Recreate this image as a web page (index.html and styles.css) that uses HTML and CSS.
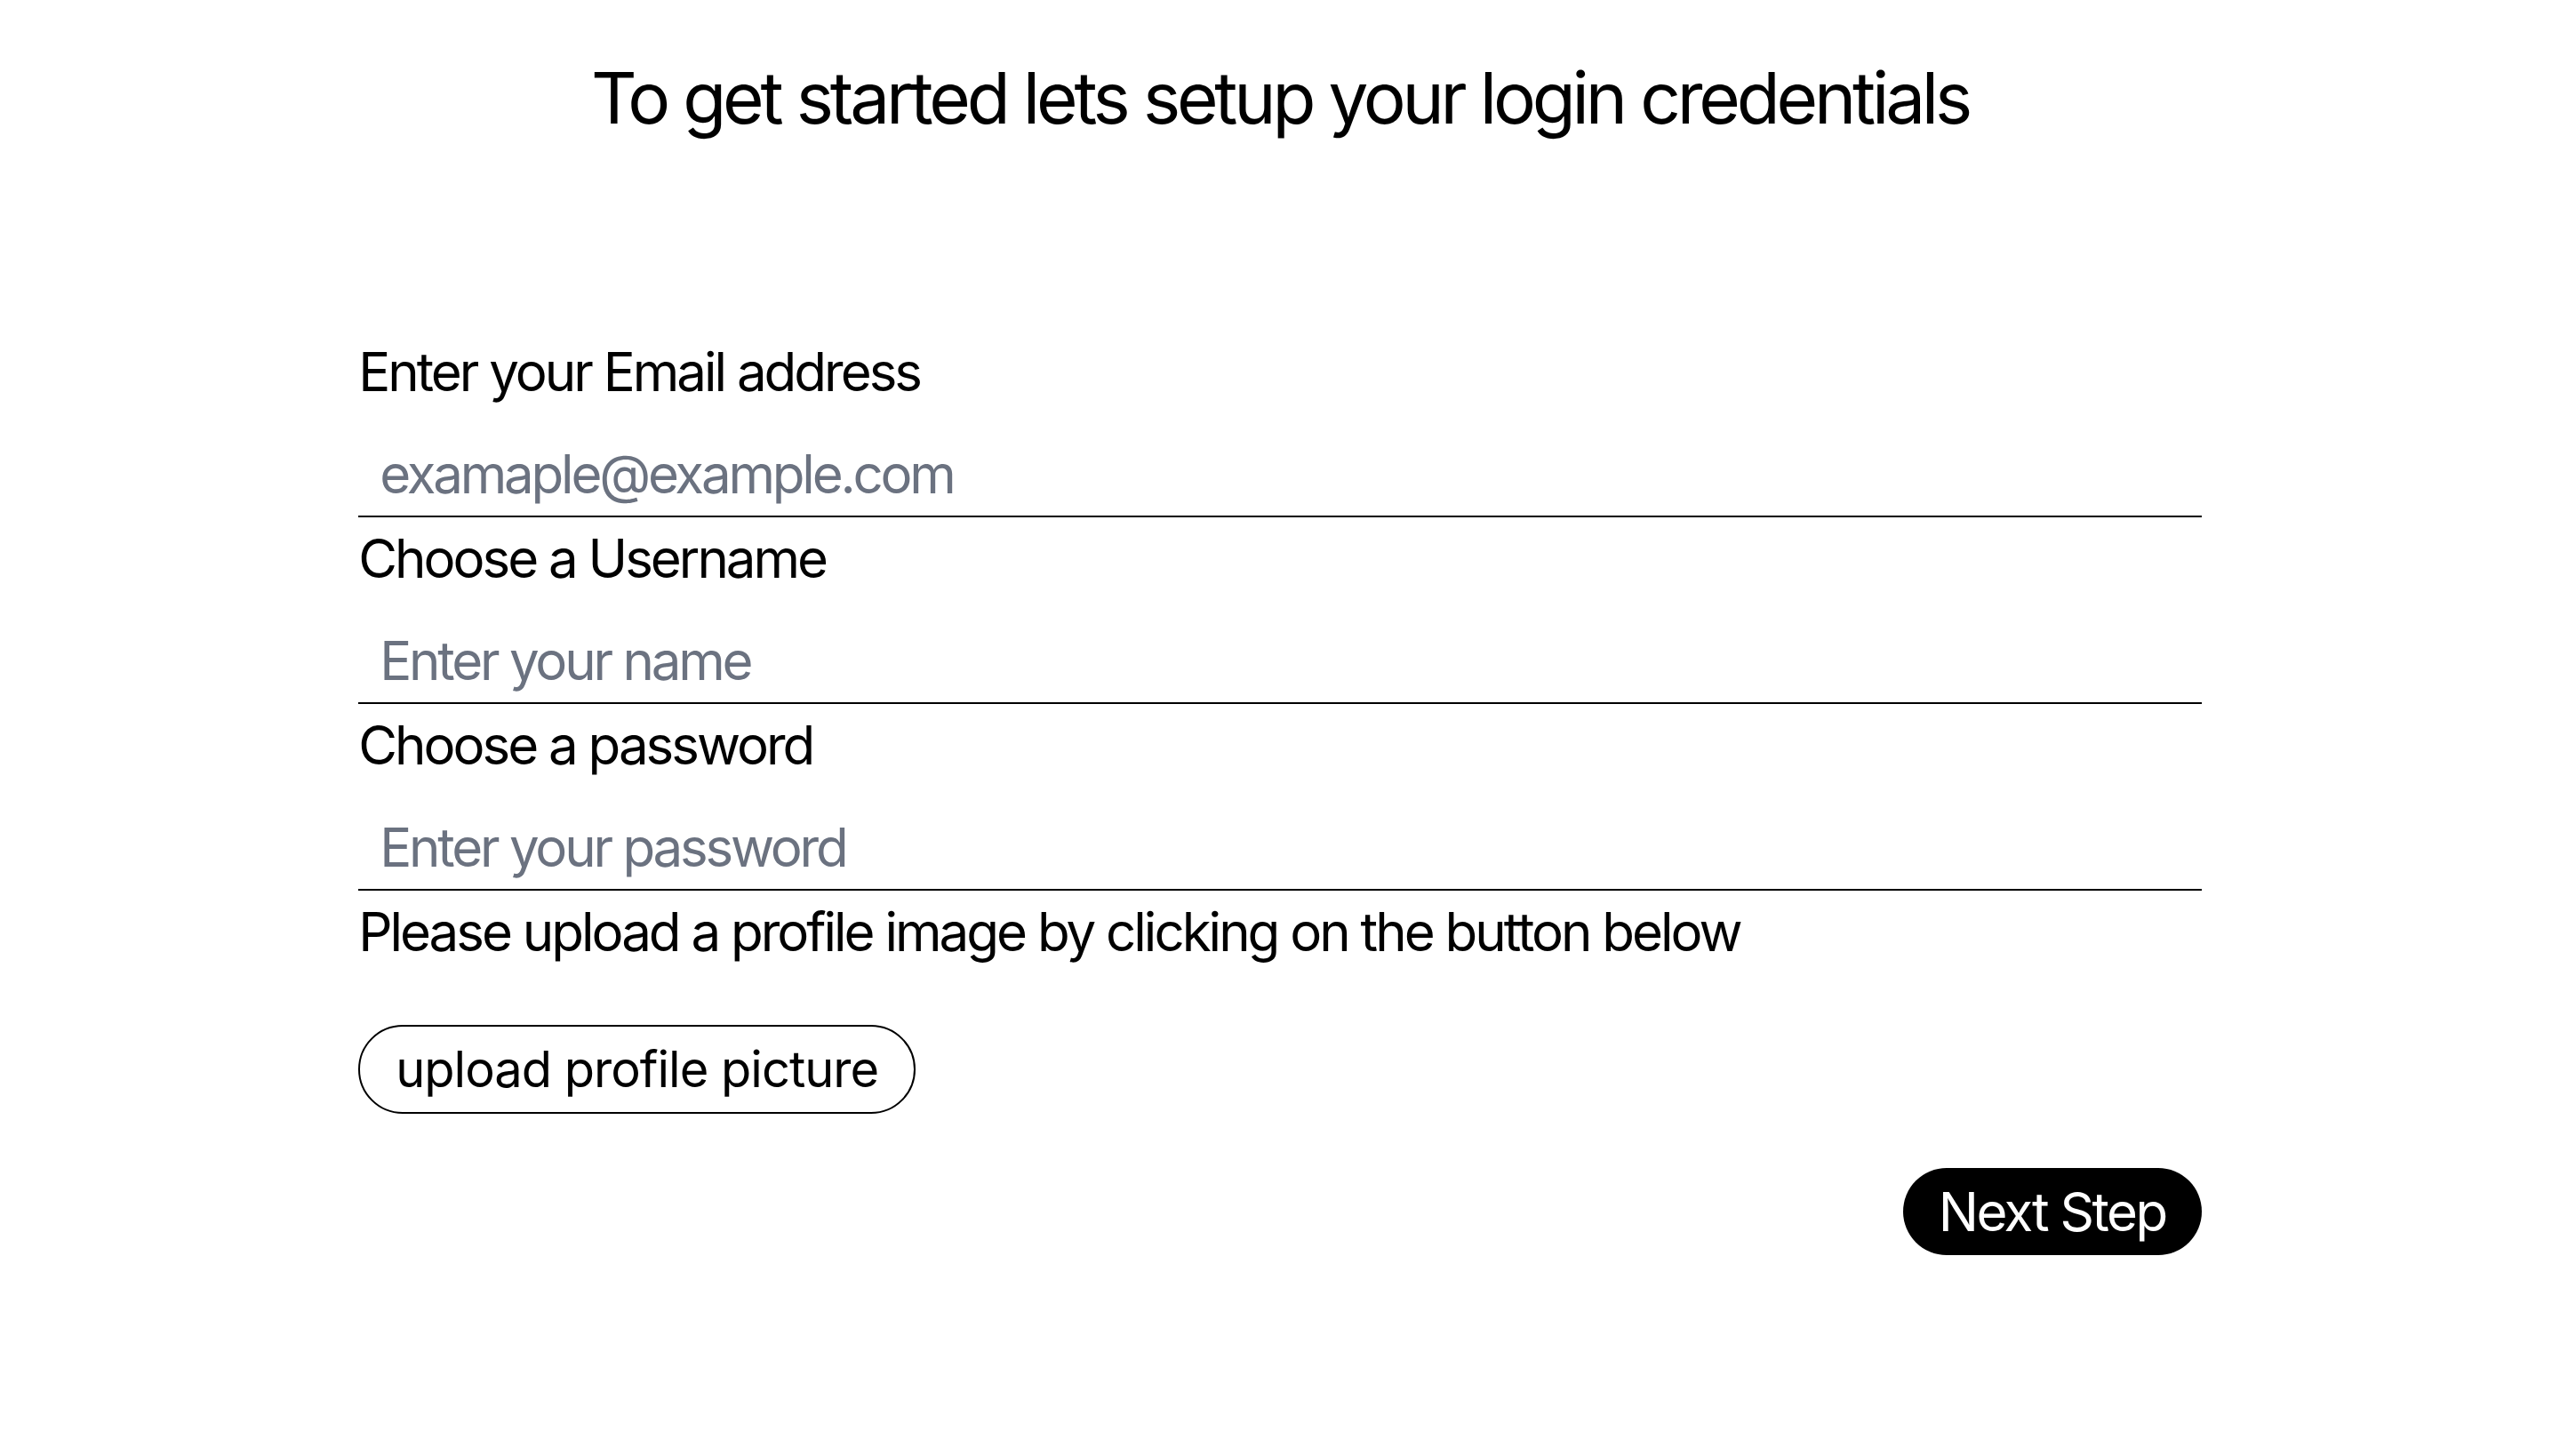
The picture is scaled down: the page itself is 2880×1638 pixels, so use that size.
FILE: index.html
```html
<!DOCTYPE html>
<html lang="en">
<head>
<meta charset="utf-8">
<title>Setup login credentials</title>
<link rel="stylesheet" href="styles.css">
</head>
<body>
<main class="page">
  <h1 class="title">To get started lets setup your login credentials</h1>
  <form class="form">
    <label class="label" for="email">Enter your Email address</label>
    <input class="field" id="email" type="email" placeholder="examaple@example.com">
    <label class="label" for="username">Choose a Username</label>
    <input class="field" id="username" type="text" placeholder="Enter your name">
    <label class="label" for="password">Choose a password</label>
    <input class="field" id="password" type="password" placeholder="Enter your password">
    <p class="label hint">Please upload a profile image by clicking on the button below</p>
    <div class="upload-row">
      <button type="button" class="btn-outline">upload profile picture</button>
    </div>
    <div class="actions">
      <button type="button" class="btn-primary">Next Step</button>
    </div>
  </form>
</main>
</body>
</html>
```

FILE: styles.css
```css
* {
  box-sizing: border-box;
}

html, body {
  margin: 0;
  padding: 0;
  background: #ffffff;
}

body {
  font-family: Inter, "Noto Sans", "Liberation Sans", sans-serif;
  color: #000000;
}

.page {
  padding-top: 62px;
}

.title {
  margin: 0;
  font-size: 80px;
  line-height: 96px;
  font-weight: 400;
  letter-spacing: -4.2px;
  text-align: center;
}

.form {
  width: 72%;
  margin: 220px auto 0;
  display: flex;
  flex-direction: column;
}

.label {
  display: block;
  margin: 0;
  font-size: 60px;
  line-height: 80px;
  font-weight: 400;
  letter-spacing: -3px;
}

.field {
  display: block;
  width: 100%;
  margin: 24px 0 6px;
  padding: 15px 24px 11px;
  border: 0;
  border-bottom: 2px solid #000000;
  font-family: inherit;
  font-size: 60px;
  line-height: 72px;
  letter-spacing: -3.2px;
  color: #000000;
  background: transparent;
  outline: none;
}

.field::placeholder {
  color: #6b7280;
  opacity: 1;
}

.upload-row {
  display: flex;
  margin-top: 65px;
}

.btn-outline {
  font-family: inherit;
  font-size: 56px;
  line-height: 64px;
  letter-spacing: -1px;
  padding: 16px 40px;
  height: 100px;
  border: 2px solid #000000;
  border-radius: 9999px;
  background: #ffffff;
  color: #000000;
  cursor: pointer;
}

.actions {
  display: flex;
  justify-content: flex-end;
  margin-top: 61px;
}

.btn-primary {
  font-family: inherit;
  font-size: 60px;
  line-height: 72px;
  letter-spacing: -2.5px;
  padding: 13px 40px;
  height: 98px;
  border: 0;
  border-radius: 9999px;
  background: #000000;
  color: #ffffff;
  cursor: pointer;
}
```
